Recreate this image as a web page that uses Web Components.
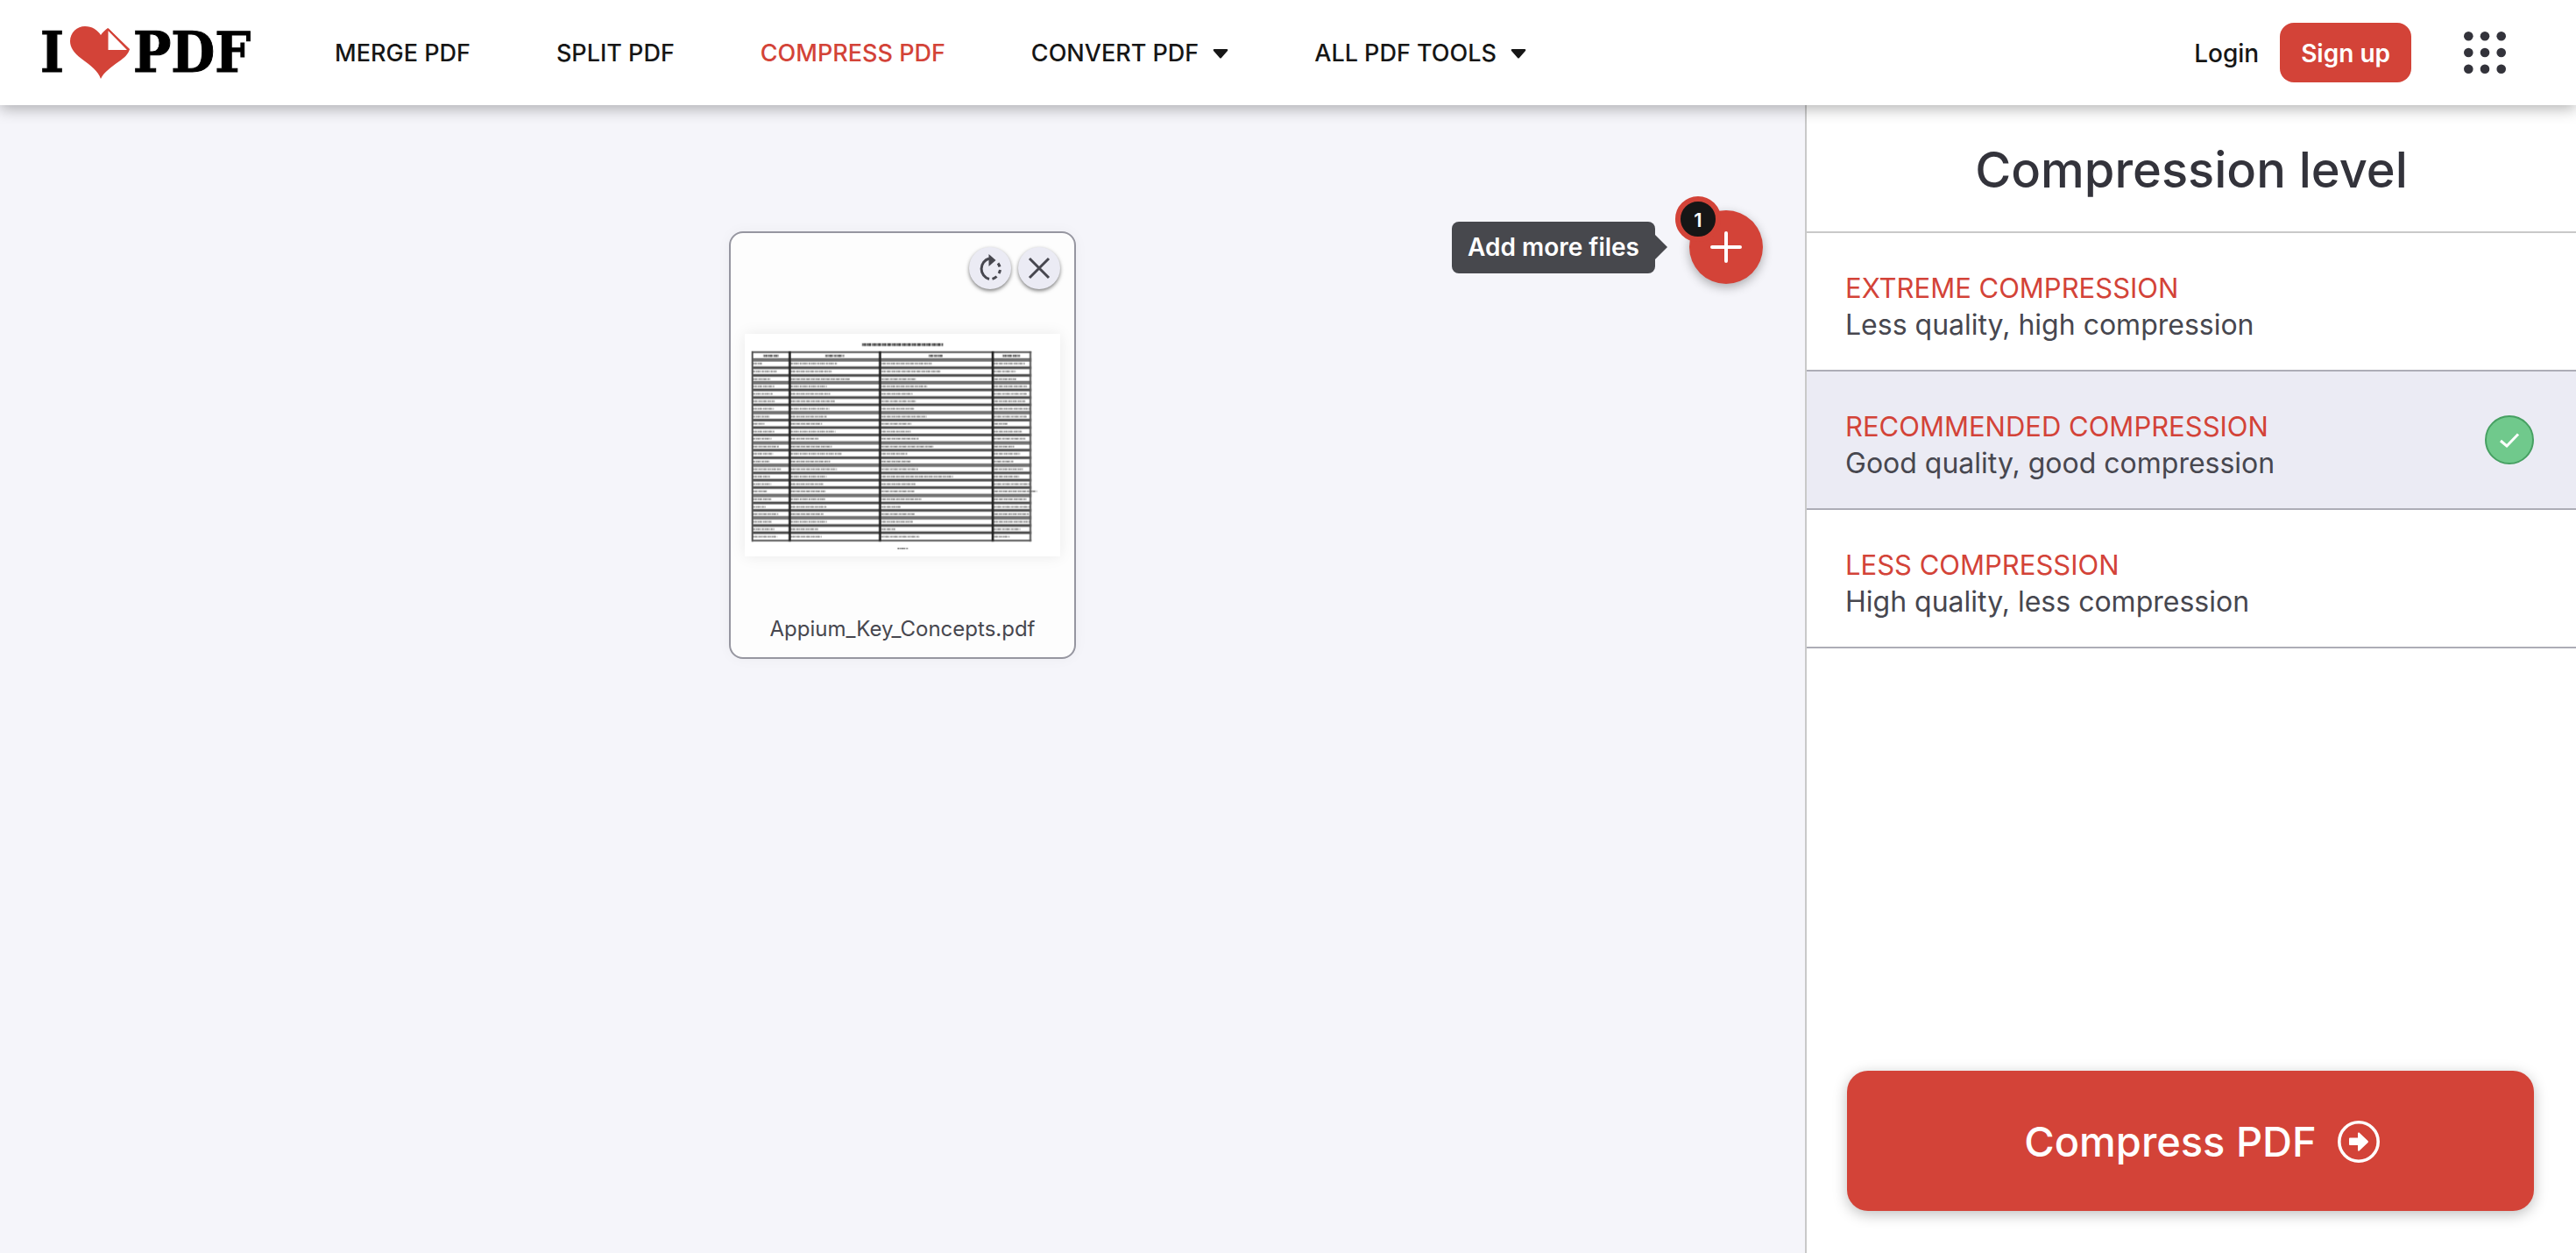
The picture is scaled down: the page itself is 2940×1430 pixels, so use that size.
<!DOCTYPE html>
<html lang="en">
<head>
<meta charset="utf-8">
<meta name="viewport" content="width=device-width, initial-scale=1">
<title>Compress PDF</title>
<style>
  :root { --red: #d34338; --ink: #161616; --slate: #33333b; --text: #47474f; --canvas: #f5f5fa; --tint: #ebebf4; }
  body { margin: 0; font-family: Inter, "Liberation Sans", sans-serif; color: var(--text); }
</style>
</head>
<body>
<pdf-app></pdf-app>
<script>
const define = (name, html, setup) => customElements.define(name, class extends HTMLElement {
  constructor() {
    super();
    const t = document.createElement('template');
    t.innerHTML = html;
    this.attachShadow({ mode: 'open' }).append(t.content.cloneNode(true));
  }
  connectedCallback() { if (setup && !this.ready) { this.ready = true; setup(this, this.shadowRoot); } }
});

define('brand-logo', `
<style>
  :host { display: block; }
  a { display: flex; align-items: center; color: #000; text-decoration: none; font: bold 64px/76px "DejaVu Serif Condensed", "DejaVu Serif", serif; -webkit-text-stroke: 1px #000; }
  svg { display: block; width: 70px; height: 62px; margin: 0 3px 0 6px; }
</style>
<a href="#"><span>I</span><svg viewBox="0 0 70 62" aria-hidden="true">
  <path fill="#d34338" d="M36 61 C33 52 25 46 14 38 C5 31 1 25 1 18 C1 8 9 1 18 1 C26 1 32 5 36 11 C38 8 41 5 44 3 L69 27 C68 32 63 37 57 41 C46 49 39 54 36 61Z"/>
  <path fill="#fff" d="M44.500 6 V28 H66Z"/>
  <path fill="none" stroke="#d34338" stroke-width="2" stroke-linejoin="round" d="M44 4 L68 28"/>
</svg><span>PDF</span></a>`);

define('nav-item', `
<style>
  :host { display: block; }
  a, button { display: flex; align-items: center; gap: 16px; padding: 0; border: 0; background: none; color: var(--ink); font: 500 27px/40px Inter, sans-serif; text-decoration: none; white-space: nowrap; cursor: pointer; }
  :host([active]) a { color: var(--red); }
  svg { width: 18px; height: 11px; }
</style>`, (el, root) => {
  const menu = el.hasAttribute('menu');
  const c = document.createElement(menu ? 'button' : 'a');
  if (menu) c.type = 'button'; else c.href = '#';
  c.append(document.createElement('slot'));
  if (menu) c.insertAdjacentHTML('beforeend', '<svg viewBox="0 0 18 11" aria-hidden="true"><path fill="#161616" d="M2 0H16Q18 0 17 2L10 10Q9 11 8 10L1 2Q0 0 2 0Z"/></svg>');
  root.append(c);
});

define('site-header', `
<style>
  :host { display: block; position: relative; z-index: 2; background: #fff; box-shadow: 0 4px 16px rgba(0,0,0,.3); }
  header { display: flex; align-items: center; height: 120px; padding: 0 80px 0 46px; box-sizing: border-box; }
  nav { display: flex; gap: 98px; margin-left: 96px; padding-top: 2px; }
  .account { display: flex; align-items: center; gap: 24px; margin-left: auto; font-size: 28px; line-height: 40px; }
  a { color: var(--ink); font-weight: 500; text-decoration: none; padding: 15px 0 13px; }
  .signup { background: var(--red); color: #fff; font-weight: 600; padding: 15px 24px 13px; border-radius: 16px; }
  button { display: block; margin-left: 36px; padding: 0; border: 0; background: none; cursor: pointer; }
  svg { display: block; width: 48px; height: 48px; fill: #33333b; }
</style>
<header>
  <brand-logo></brand-logo>
  <nav>
    <nav-item>MERGE PDF</nav-item><nav-item>SPLIT PDF</nav-item><nav-item active>COMPRESS PDF</nav-item>
    <nav-item menu>CONVERT PDF</nav-item><nav-item menu>ALL PDF TOOLS</nav-item>
  </nav>
  <div class="account">
    <a href="#">Login</a><a class="signup" href="#">Sign up</a>
    <button type="button" aria-label="Menu"><svg viewBox="0 0 48 48"><circle cx="5.300" cy="5.300" r="5.300"/><circle cx="24" cy="5.300" r="5.300"/><circle cx="42.700" cy="5.300" r="5.300"/><circle cx="5.300" cy="24" r="5.300"/><circle cx="24" cy="24" r="5.300"/><circle cx="42.700" cy="24" r="5.300"/><circle cx="5.300" cy="42.700" r="5.300"/><circle cx="24" cy="42.700" r="5.300"/><circle cx="42.700" cy="42.700" r="5.300"/></svg></button>
  </div>
</header>`);

define('page-preview', `
<style>
  :host { display: block; background: #fff; box-shadow: 0 0 16px rgba(0,0,0,.08); }
  svg { display: block; width: 100%; }
</style>
<svg viewBox="0 0 1080 762" aria-hidden="true"></svg>`, (el, root) => {
  const ends = [
    [149,405,730,1049],[199,387,762,1017],[177,449,678,1019],[192,371,714,1056],[187,383,664,1056],
    [192,399,676,1050],[189,379,671,1070],[174,371,712,1055],[157,354,660,991],[192,400,659,1038],
    [181,344,685,1050],[206,388,735,1013],[187,422,646,1032],[174,383,660,1009],[215,405,683,1042],
    [176,370,803,1029],[180,358,675,1070],[167,367,670,1090],[180,365,694,1054],[162,370,624,1068],
    [204,359,671,1062],[181,371,665,1070],[191,341,605,1034],[201,353,688,996]];
  const cols = [118, 248, 558, 942];
  const x = v => v - 90, y = v => v - 393;
  const dashes = ['5 1 8 2 3 1 11 3', '7 2 4 1 9 1 3 3', '4 1 10 3 6 1 5 2'];
  const smudge = (a, b, at, i, op, w) => `<path d="M${x(a)} ${y(at)}H${x(b)}" stroke="#222" stroke-width="${w}" stroke-dasharray="${dashes[i % 3]}" opacity="${op}"/>`;
  let s = '<defs><filter id="soft" x="-5%" y="-5%" width="110%" height="110%"><feGaussianBlur stdDeviation="2"/></filter></defs><g fill="none" filter="url(#soft)">';
  s += smudge(492, 769, 430, 0, .8, 10);
  [[154,206],[366,430],[720,768],[973,1032]].forEach(([a, b], i) => s += smudge(a, b, 468, i, .7, 8));
  s += `<path stroke="#555" stroke-width="6" d="M${x(113)} ${y(456)}H${x(1071)}M${x(113)} ${y(1101)}H${x(1071)}"/>`;
  const lines = [482,509,535,560,585,611,636,663,688,714,739,766,791,817,843,869,894,919,946,972,997,1023,1049,1074];
  lines.forEach((l, i) => {
    const wide = [0,3,7,11,14,18,21].includes(i);
    s += `<path d="M${x(113)} ${y(l)}H${x(1071)}" stroke="${wide ? '#727272' : '#4c4c4c'}" stroke-width="${wide ? 12 : 9}"/>`;
    ends[i].forEach((e, c) => s += smudge(cols[c], e, l + 13, i + c, .5, 6));
  });
  s += `<path stroke="#222" stroke-width="8" d="M${x(244)} ${y(453)}V${y(1104)}M${x(553)} ${y(453)}V${y(1104)}M${x(939)} ${y(453)}V${y(1104)}"/>`;
  s += `<path stroke="#555" stroke-width="6" d="M${x(116)} ${y(453)}V${y(1104)}M${x(1068)} ${y(453)}V${y(1104)}"/>`;
  s += smudge(613, 648, 1128, 1, .5, 6) + '</g>';
  root.querySelector('svg').innerHTML = s;
});

define('file-card', `
<style>
  :host { display: flex; flex-direction: column; width: 396px; height: 488px; box-sizing: border-box; padding: 16px 16px 8px; background: #fdfdfd; border: 2px solid #9696a0; border-radius: 16px; box-shadow: 0 0 16px rgba(0,0,0,.04); }
  .tools { display: flex; justify-content: flex-end; gap: 8px; }
  button { display: grid; place-items: center; width: 48px; height: 48px; padding: 0; border: 0; border-radius: 50%; background: var(--tint); box-shadow: 0 2px 4px rgba(0,0,0,.5); cursor: pointer; }
  svg { display: block; width: 32px; height: 32px; }
  page-preview { margin: 51px 0 auto; }
  p { margin: 0; font-size: 24px; line-height: 48px; text-align: center; color: var(--text); white-space: nowrap; }
</style>
<div class="tools">
  <button type="button" aria-label="Rotate"><svg viewBox="0 0 32 32" fill="none" stroke="#47474f" stroke-width="3"><path d="M15 28.500A12.200 12.200 0 0 1 15 5"/><path fill="#47474f" stroke="none" d="M14.500 0L22.500 7L14.500 14Z"/><path d="M25 10.500A12 12 0 0 1 27 14.500M27.500 18A12 12 0 0 1 26 22M23.500 25.500A12 12 0 0 1 18.500 28.400"/></svg></button>
  <button type="button" aria-label="Remove"><svg viewBox="0 0 32 32" fill="none" stroke="#47474f" stroke-width="3"><path d="M5 5L27 27M27 5L5 27"/></svg></button>
</div>
<page-preview></page-preview>
<p><slot></slot></p>`);

define('add-files', `
<style>
  :host { display: flex; align-items: center; gap: 26px; }
  .tip { position: relative; padding: 10px 18px; border-radius: 8px; background: #47484d; color: #fff; font-weight: 600; font-size: 28px; line-height: 39px; white-space: nowrap; }
  .tip::after { content: ""; position: absolute; left: 100%; top: 50%; margin-top: -14px; border: 14px solid transparent; border-left-color: #47484d; border-right: 0; }
  .wrap { position: relative; margin-left: 13px; }
  button { display: grid; place-items: center; width: 84px; height: 84px; padding: 0; border: 0; border-radius: 50%; background: var(--red); box-shadow: 0 4px 12px rgba(0,0,0,.3); cursor: pointer; }
  svg { display: block; width: 38px; height: 38px; }
  .count { position: absolute; left: -16px; top: -16px; width: 40px; height: 40px; border: 6px solid var(--red); border-radius: 50%; background: var(--ink); color: #fff; font-weight: 600; font-size: 22px; line-height: 42px; text-align: center; }
</style>
<span class="tip" id="tip" role="tooltip">Add more files</span>
<div class="wrap">
  <button type="button" aria-labelledby="tip"><svg viewBox="0 0 38 38" fill="none" stroke="#fff" stroke-width="4" stroke-linecap="round"><path d="M19 3V35M3 19H35"/></svg></button>
  <span class="count">1</span>
</div>`);

define('compression-options', `
<style>
  :host { display: block; }
  fieldset { margin: 0; padding: 0; border: 0; }
  label { position: relative; display: flex; align-items: center; justify-content: space-between; padding: 42px 48px 30px 44px; border-bottom: 2px solid #adadb6; font-size: 32px; line-height: 42px; cursor: pointer; }
  .name { display: block; color: var(--red); font-size: 31px; text-transform: uppercase; }
  .about { display: block; color: var(--text); }
  input { appearance: none; flex: none; width: 56px; height: 56px; margin: 0; border-radius: 50%; }
  svg { display: none; position: absolute; right: 48px; top: calc(50% - 28px); width: 56px; height: 56px; }
  label:has(input:checked) { background: var(--tint); }
  input:checked ~ svg { display: block; }
</style>
<fieldset aria-label="Compression level"></fieldset>`, (el, root) => {
  root.querySelector('fieldset').innerHTML = [
    ['Extreme compression', 'Less quality, high compression'],
    ['Recommended compression', 'Good quality, good compression', 'checked'],
    ['Less compression', 'High quality, less compression']
  ].map(([n, a, c = ''], i) => `<label for="level${i}"><span><span class="name">${n}</span><span class="about">${a}</span></span>
    <input type="radio" name="level" id="level${i}" ${c}>
    <svg viewBox="0 0 56 56" aria-hidden="true"><circle cx="28" cy="28" r="27" fill="#70c98c" stroke="#46a062" stroke-width="2"/><path d="M18 29L25 35L38 21.500" fill="none" stroke="#fff" stroke-width="3"/></svg></label>`).join('');
});

define('tool-panel', `
<style>
  :host { display: flex; flex-direction: column; box-sizing: border-box; background: #fff; border-left: 2px solid #c9c9c9; }
  h1 { margin: 0; padding: 37px 16px 33px; border-bottom: 2px solid #c9c9c9; color: var(--slate); font-weight: 500; font-size: 56px; line-height: 74px; text-align: center; }
  .action { margin-top: auto; padding: 48px 48px 48px 46px; }
  button { display: flex; align-items: center; justify-content: center; gap: 24px; width: 100%; height: 160px; padding: 2px 0 0 26px; border: 0; border-radius: 24px; background: var(--red); color: #fff; font: 500 47px/60px Inter, sans-serif; box-shadow: 0 4px 16px rgba(0,0,0,.25); cursor: pointer; }
  svg { display: block; width: 48px; height: 48px; }
</style>
<h1>Compression level</h1>
<compression-options></compression-options>
<div class="action"><button type="button">Compress PDF
<svg viewBox="0 0 48 48" aria-hidden="true"><circle cx="24" cy="24" r="22.200" fill="none" stroke="#fff" stroke-width="3.600"/><path fill="#fff" d="M14 19.500Q13 19.500 13 20.500V27Q13 28 14 28H23V33.500Q23 35 24.500 34.500L34.500 25Q35.500 24 34.500 23L24.500 13.500Q23 13 23 14.500V19.500Z"/></svg></button></div>`);

define('pdf-app', `
<style>
  :host { display: flex; flex-direction: column; min-height: 100vh; }
  .body { flex: 1; display: flex; }
  main { flex: 1; position: relative; display: flex; flex-wrap: wrap; justify-content: center; align-items: flex-start; padding: 144px 24px 24px; background: var(--canvas); }
  tool-panel { flex: 0 0 880px; }
  add-files { position: absolute; right: 48px; top: 120px; }
</style>
<site-header></site-header>
<div class="body">
  <main><file-card>Appium_Key_Concepts.pdf</file-card><add-files></add-files></main>
  <tool-panel></tool-panel>
</div>`);
</script>
</body>
</html>
